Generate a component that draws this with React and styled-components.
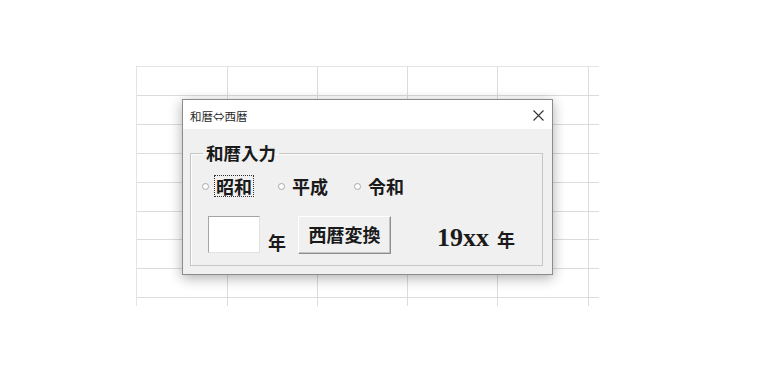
import React from "react";
import styled, { createGlobalStyle } from "styled-components";

const Global = createGlobalStyle`
  html, body { margin: 0; padding: 0; background: #ffffff; }
  body { width: 768px; height: 384px; overflow: hidden; font-family: "Noto Sans CJK JP", "Noto Sans", sans-serif; }
`;

const Page = styled.div`
  position: relative;
  width: 768px;
  height: 384px;
  padding: 66px 0 0 136px;
  box-sizing: border-box;
`;

const Sheet = styled.div`
  display: grid;
  grid-template-columns: 91px 90px 90px 90px 91px 10px;
  grid-template-rows: 29px 29px 29px 29px 29px 28px 29px 29px 8px;
  width: max-content;
  border-top: 1px solid #e4e4e4;
  border-left: 1px solid #e4e4e4;
`;

const Cell = styled.div`
  box-sizing: border-box;
  border-right: ${(p) => (p.$lastCol ? "none" : "1px solid #dcdcdc")};
  border-bottom: ${(p) => (p.$lastRow ? "none" : "1px solid #dcdcdc")};
`;

const Dialog = styled.div`
  position: absolute;
  left: 182px;
  top: 99px;
  width: 371px;
  height: 176px;
  box-sizing: border-box;
  border: 1px solid #8c8c8c;
  background: #f0f0f0;
  box-shadow: 0 3px 12px rgba(0, 0, 0, 0.32);
  display: flex;
  flex-direction: column;
`;

const TitleBar = styled.div`
  height: 29px;
  flex: none;
  background: #ffffff;
  display: flex;
  align-items: center;
  justify-content: space-between;
  padding: 0 8px 0 7px;
`;

const Title = styled.span`
  font-size: 11.5px;
  color: #2a2a2a;
  padding-top: 2px;
`;

const CloseIcon = styled.svg`
  width: 11px;
  height: 11px;
  margin-top: 1px;
`;

const Body = styled.div`
  flex: 1;
  padding: 15px 9px 8px 7px;
  display: flex;
`;

const Group = styled.fieldset`
  flex: 1;
  margin: 0;
  padding: 13px 8px 0 11px;
  border: 1px solid #c6c6c6;
  box-shadow: inset 1px 1px 0 #fbfbfb;
  display: flex;
  flex-direction: column;
  min-width: 0;
`;

const Legend = styled.legend`
  font-size: 17.5px;
  line-height: 18px;
  font-weight: 700;
  color: #1a1a1a;
  padding: 0 3px;
  margin-left: 1px;
`;

const RadioRow = styled.div`
  display: flex;
  align-items: center;
  gap: 24px;
  height: 22px;
`;

const RadioItem = styled.label`
  display: flex;
  align-items: center;
  gap: 5px;
`;

const Circle = styled.span`
  width: 7px;
  height: 7px;
  box-sizing: border-box;
  border-radius: 50%;
  border: 1px solid #a8a8a8;
  background: #ffffff;
  margin-top: 1px;
`;

const RadioText = styled.span`
  font-size: 18px;
  line-height: 20px;
  font-weight: 700;
  color: #1a1a1a;
  padding: 0 1px;
  border: 1px dotted ${(p) => (p.$focused ? "#333" : "transparent")};
`;

const InputRow = styled.div`
  display: flex;
  align-items: flex-end;
  margin-top: 19px;
  height: 38px;
`;

const TextBox = styled.div`
  width: 52px;
  height: 37px;
  box-sizing: border-box;
  margin: 0 0 1px 6px;
  background: #ffffff;
  border-top: 1px solid #a4a4a4;
  border-left: 1px solid #a4a4a4;
  border-right: 1px solid #e2e2e2;
  border-bottom: 1px solid #e2e2e2;
`;

const Unit = styled.span`
  font-size: 18px;
  line-height: 18px;
  font-weight: 700;
  color: #1a1a1a;
  margin-left: ${(p) => p.$gap}px;
  margin-bottom: ${(p) => p.$drop}px;
`;

const Button = styled.button`
  width: 93px;
  height: 38px;
  box-sizing: border-box;
  margin-left: 12px;
  padding: 0 0 3px;
  background: #f0f0f0;
  border-top: 1px solid #ffffff;
  border-left: 1px solid #ffffff;
  border-right: 1px solid #8e8e8e;
  border-bottom: 1px solid #8e8e8e;
  box-shadow: inset -1px -1px 0 #c4c4c4;
  font-family: "Noto Sans CJK JP", sans-serif;
  font-size: 18px;
  font-weight: 700;
  color: #1a1a1a;
`;

const Result = styled.span`
  font-family: "Liberation Serif", "Times New Roman", serif;
  font-size: 26px;
  line-height: 26px;
  font-weight: 700;
  color: #1a1a1a;
  margin-left: 46px;
  margin-bottom: 3px;
`;

const rows = 9;
const cols = 6;

export default function App() {
  const cells = [];
  for (let r = 0; r < rows; r++) {
    for (let c = 0; c < cols; c++) {
      cells.push(
        <Cell key={`${r}-${c}`} $lastRow={r === rows - 1} $lastCol={c === cols - 1} />
      );
    }
  }
  return (
    <>
      <Global />
      <Page>
        <Sheet>{cells}</Sheet>
        <Dialog>
          <TitleBar>
            <Title>和暦⇔西暦</Title>
            <CloseIcon viewBox="0 0 11 11">
              <path d="M0.5 0.5 L10.5 10.5 M10.5 0.5 L0.5 10.5" stroke="#333" strokeWidth="1.1" fill="none" />
            </CloseIcon>
          </TitleBar>
          <Body>
            <Group>
              <Legend>和暦入力</Legend>
              <RadioRow>
                <RadioItem>
                  <Circle />
                  <RadioText $focused>昭和</RadioText>
                </RadioItem>
                <RadioItem>
                  <Circle />
                  <RadioText>平成</RadioText>
                </RadioItem>
                <RadioItem>
                  <Circle />
                  <RadioText>令和</RadioText>
                </RadioItem>
              </RadioRow>
              <InputRow>
                <TextBox />
                <Unit $gap={8} $drop={3}>年</Unit>
                <Button>西暦変換</Button>
                <Result>19xx</Result>
                <Unit $gap={8} $drop={6}>年</Unit>
              </InputRow>
            </Group>
          </Body>
        </Dialog>
      </Page>
    </>
  );
}
